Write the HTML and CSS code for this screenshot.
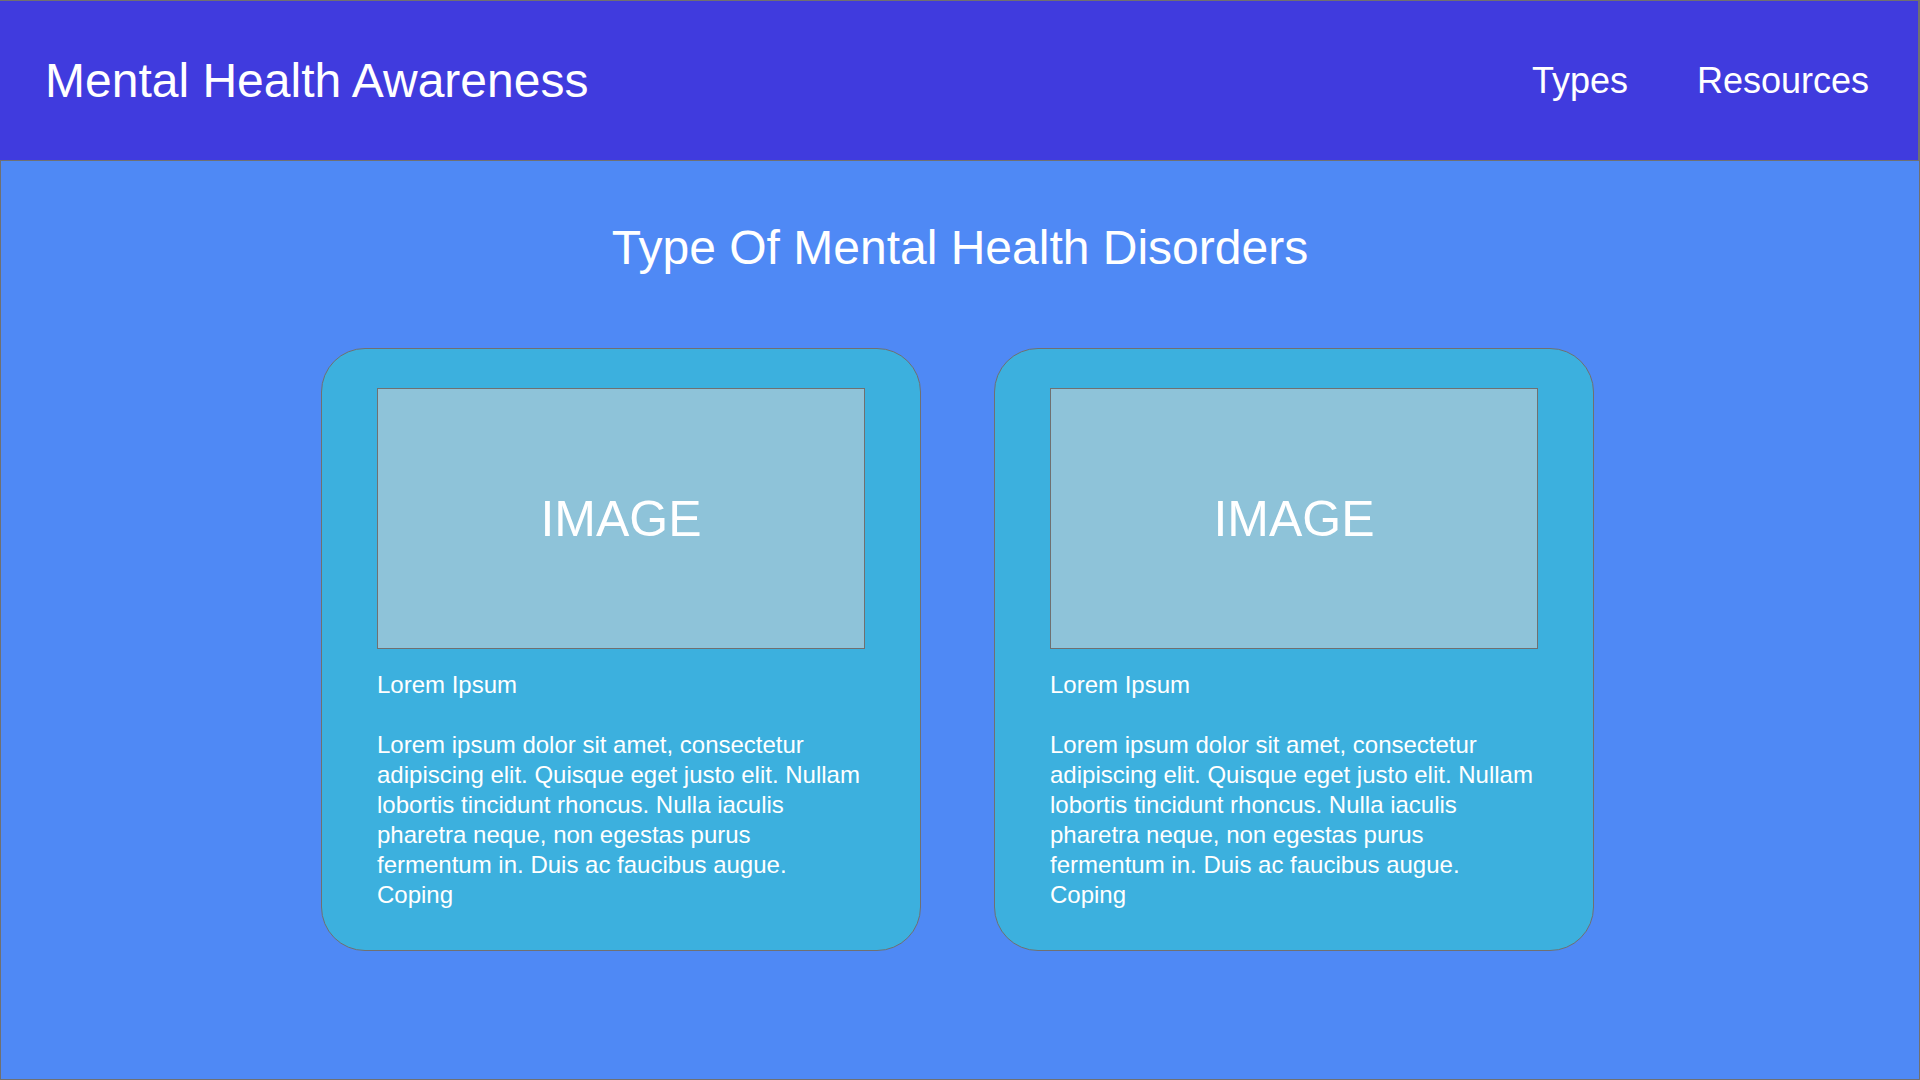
FILE: index.html
```html
<!DOCTYPE html>
<html lang="en">
<head>
<meta charset="utf-8">
<meta name="viewport" content="width=device-width, initial-scale=1">
<title>Mental Health Awareness</title>
<link rel="stylesheet" href="styles.css">
</head>
<body>
<header class="site-header">
  <h1 class="brand">Mental Health Awareness</h1>
  <nav class="nav">
    <a href="#types">Types</a>
    <a href="#resources">Resources</a>
  </nav>
</header>
<main class="content" id="types">
  <h2 class="title">Type Of Mental Health Disorders</h2>
  <div class="cards">
    <article class="card">
      <div class="card-image">IMAGE</div>
      <h3 class="card-title">Lorem Ipsum</h3>
      <p class="card-text">Lorem ipsum dolor sit amet, consectetur adipiscing elit. Quisque eget justo elit. Nullam lobortis tincidunt rhoncus. Nulla iaculis pharetra neque, non egestas purus fermentum in. Duis ac faucibus augue. Coping</p>
    </article>
    <article class="card">
      <div class="card-image">IMAGE</div>
      <h3 class="card-title">Lorem Ipsum</h3>
      <p class="card-text">Lorem ipsum dolor sit amet, consectetur adipiscing elit. Quisque eget justo elit. Nullam lobortis tincidunt rhoncus. Nulla iaculis pharetra neque, non egestas purus fermentum in. Duis ac faucibus augue. Coping</p>
    </article>
  </div>
</main>
</body>
</html>
```
FILE: styles.css
```css
* {
  box-sizing: border-box;
}

body {
  display: flex;
  flex-direction: column;
  min-height: 100vh;
  margin: 0;
  background: #4f89f5;
  color: #fff;
  font-family: "Liberation Sans", Arial, sans-serif;
}

h1,
h2,
h3,
p {
  margin: 0;
  font-weight: 400;
}

.site-header {
  display: flex;
  align-items: center;
  justify-content: space-between;
  min-height: 161px;
  padding: 0 49px 0 45px;
  border: 1px solid #707070;
  border-right-width: 2px;
  border-left: 0;
  background: #403bde;
}

.brand,
.title {
  font-size: 48px;
  line-height: 58px;
}

.nav {
  display: flex;
  gap: 69px;
}

.nav a {
  color: inherit;
  font-size: 36px;
  line-height: 44px;
  text-decoration: none;
}

.content {
  flex: 1;
  padding: 58px 40px;
  border: 1px solid #707070;
  border-top: 0;
}

.title {
  text-align: center;
}

.cards {
  display: flex;
  flex-wrap: wrap;
  justify-content: center;
  gap: 73px;
  margin-top: 71px;
  padding-right: 5px;
}

.card {
  width: 600px;
  padding: 39px 55px 40px;
  border: 1px solid #707070;
  border-radius: 44px;
  background: #3cb0de;
}

.card-image {
  display: flex;
  align-items: center;
  justify-content: center;
  height: 261px;
  border: 1px solid #707070;
  background: #8ec3d9;
  font-size: 50px;
}

.card-title,
.card-text {
  font-size: 24px;
  line-height: 30px;
}

.card-title {
  margin: 21px 0 30px;
}
```
